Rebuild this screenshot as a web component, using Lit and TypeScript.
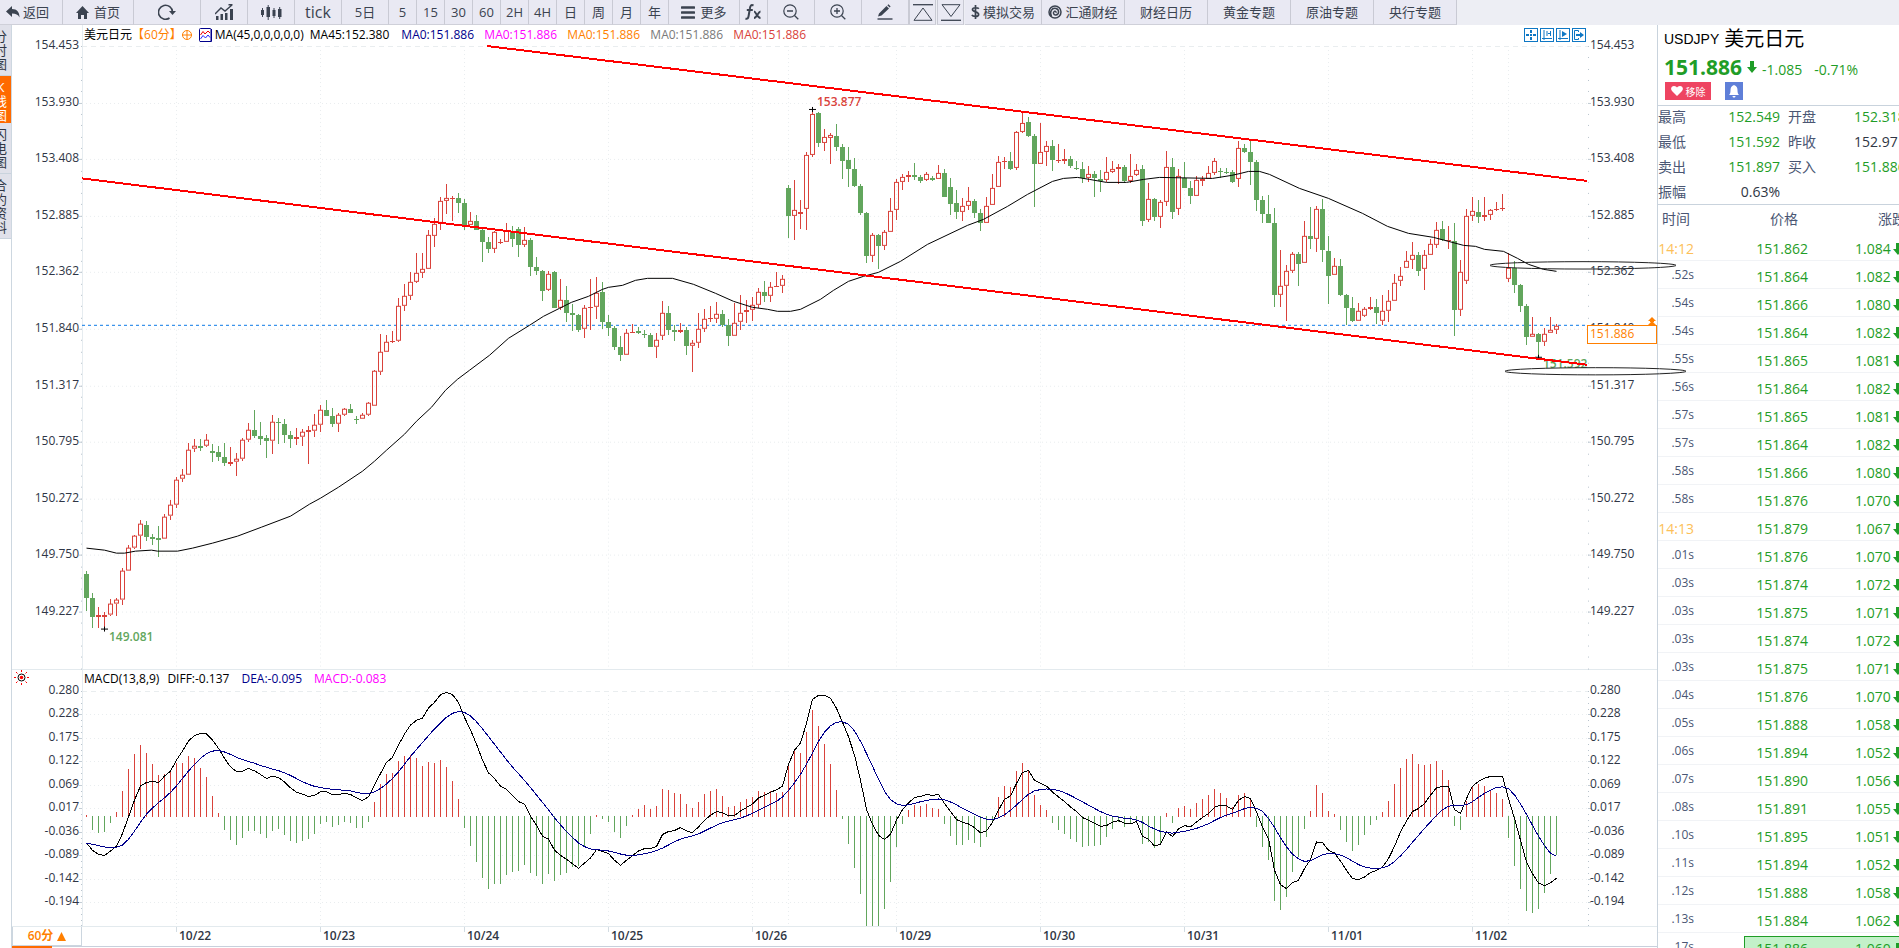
import { LitElement, html, svg, css, nothing } from "lit";
import { customElement } from "lit/decorators.js";

type Candle = [number, number, number, number, number];

/* Candles, one per hour: rising flag, high, body top, body bottom, low (plot rows). */
const CANDLES: Candle[] = `
0 571 574 598 611|0 593 598 617 628|1 607 615 617 628|1 612 615 617 628|1 599 604 615 616|1 598 600 604 616
1 568 571 600 605|1 545 548 571 571|1 535 536 548 549|1 520 524 536 549|0 521 525 537 541|0 534 537 539 545
0 526 538 540 557|1 514 517 539 539|1 500 505 516 520|1 477 480 505 508|1 469 475 479 482|1 443 450 475 475
1 439 446 449 452|0 439 446 448 451|1 434 440 446 447|0 444 451 453 462|0 446 452 457 461|0 443 457 463 466
1 447 462 464 466|1 453 459 462 476|1 438 440 459 461|1 423 430 440 442|0 410 430 436 438|0 422 436 439 445
0 435 438 441 458|1 415 422 441 454|0 418 422 423 444|0 419 424 435 443|0 431 435 439 448|1 428 437 439 445
1 429 432 437 446|1 426 430 432 464|1 414 425 431 437|1 405 410 425 432|0 400 410 416 416|0 408 416 424 427
1 413 415 424 432|1 408 409 415 416|0 404 409 413 413|0 416 419 420 424|1 413 415 419 419|1 402 403 415 416
1 370 371 406 406|1 334 352 372 375|1 335 342 352 352|1 331 341 342 343|1 298 306 341 342|1 284 296 306 311
1 272 282 296 300|1 253 273 282 283|1 253 269 273 278|1 230 235 269 269|1 218 224 236 247|1 197 201 223 230
1 184 198 201 214|1 196 198 199 221|0 193 198 203 213|0 199 203 225 230|1 212 221 225 225|0 215 221 230 230
0 229 230 242 262|0 237 242 249 253|1 231 232 249 253|1 239 242 243 244|1 223 231 242 242|0 226 231 239 247
0 227 229 245 257|1 227 240 245 247|0 238 240 267 276|0 257 267 271 275|0 270 271 291 301|1 271 274 290 291
0 271 272 308 308|1 279 300 308 310|0 286 300 313 322|0 304 313 315 331|0 314 315 330 332|1 305 308 329 338
1 279 307 308 330|1 277 293 307 319|0 282 292 322 329|0 315 322 328 336|0 326 328 347 350|0 336 347 355 361
1 329 333 355 355|1 324 332 333 333|0 327 331 333 334|0 330 334 335 338|0 333 335 347 347|1 333 340 347 358
1 301 313 336 340|0 306 313 330 335|0 325 330 332 341|1 323 330 332 333|0 327 330 346 355|1 340 343 346 372
1 313 329 343 348|1 309 319 329 332|1 306 318 319 322|1 302 314 319 323|0 310 314 325 327|0 319 325 336 346
1 303 323 336 336|1 295 313 322 330|1 300 310 312 323|1 297 305 310 321|1 288 292 305 308|0 281 292 296 302
1 282 287 296 302|1 272 286 287 287|1 275 279 286 293|0 185 188 216 238|1 180 210 216 240|1 200 212 214 229
1 152 155 209 230|1 111 114 155 157|0 112 113 143 147|1 129 137 143 151|1 133 135 138 164|0 124 136 147 151
0 144 147 161 179|0 147 160 169 187|0 158 169 186 187|0 184 186 213 215|0 212 213 256 263|1 233 235 256 262
0 234 235 246 269|1 230 232 246 250|1 198 211 232 232|1 179 182 210 220|1 174 177 182 190|1 171 175 177 182
0 163 175 177 180|0 175 177 181 183|1 172 174 180 181|0 176 178 180 181|1 165 173 179 179|0 169 173 197 197
0 178 187 204 215|0 190 203 212 219|1 198 206 212 221|1 187 201 206 210|0 199 201 213 218|0 209 213 223 231
1 197 206 223 223|1 174 188 205 205|1 156 162 187 187|1 157 161 162 169|0 152 161 169 170|1 131 132 168 170
1 112 123 132 133|0 117 122 136 137|0 134 136 164 207|1 123 152 164 164|1 141 146 152 166|0 140 146 160 171
1 144 160 161 163|1 149 159 161 164|0 156 159 166 168|0 161 168 169 170|0 162 169 178 183|1 166 174 178 182
0 171 174 178 197|0 170 179 181 192|1 157 172 180 182|1 161 169 172 173|1 164 167 169 184|0 165 167 181 183
1 154 176 181 183|1 164 170 175 176|0 165 169 221 226|1 183 199 220 222|0 198 199 217 221|1 200 202 217 228
1 151 167 202 206|0 158 167 212 219|1 169 176 209 215|0 162 178 188 188|0 181 188 196 204|1 176 180 196 196
1 176 179 181 186|1 166 173 179 179|1 158 161 173 175|0 168 171 172 178|0 168 172 173 174|0 170 172 182 183
1 141 148 179 187|0 144 148 152 153|0 141 152 162 185|0 160 162 200 211|0 196 200 214 223|0 195 214 223 223
0 208 223 295 307|1 250 286 295 307|1 265 271 286 321|1 252 254 271 273|0 252 254 264 286|1 221 236 263 263
0 207 236 239 249|1 206 209 239 252|0 199 209 250 262|0 236 251 276 304|1 258 266 275 275|0 259 266 295 296
0 294 295 308 325|0 297 308 321 322|1 303 311 321 321|1 307 309 316 317|1 297 307 309 310|0 299 307 313 324
1 295 311 321 325|1 290 301 311 322|1 274 283 301 301|1 267 276 281 286|1 251 261 268 268|1 242 255 260 269
0 252 255 271 276|1 250 255 269 290|1 239 244 255 255|1 222 230 245 248|0 221 229 240 241|1 226 240 241 249
0 223 241 310 336|1 260 272 310 316|1 209 216 281 284|1 197 211 216 221|0 200 212 217 223|1 197 215 217 221
1 209 210 215 220|1 202 209 210 211|1 194 208 209 211|1 253 268 279 282|0 261 268 285 293|0 284 285 306 312
0 304 306 337 345|1 317 334 337 337|0 333 334 342 358|1 328 334 342 346|1 317 330 333 333|1 324 326 330 334
`
  .trim()
  .split(/[|\n]/)
  .map((r) => r.trim().split(" ").map(Number) as Candle);

const MA45 =
  "86,548 104,550 116,553 124,553 135,551 151,550 157,551 177,551 192,548 212,543 237,536 261,527 290,516 309,504 320,498 338,487 362,471 374,461 386,450 404,434 416,421 431,407 445,390 457,379 469,370 489,355 508,338 529,325 543,316 559,308 571,302 588,296 602,289 608,287 622,285 635,280 647,278 672,278 693,284 715,293 733,301 752,307 767,309 777,311 790,311 800,309 820,299 833,290 848,281 863,276 878,272 900,261 927,244 967,225 983,219 1007,206 1027,194 1052,181 1063,178 1077,177 1089,179 1106,182 1126,182 1143,179 1159,177 1212,178 1231,175 1240,173 1248,171 1259,171 1269,174 1299,188 1328,198 1362,213 1387,226 1408,233 1433,237 1448,241 1463,245 1475,246 1484,249 1503,251 1517,258 1528,264 1543,269 1556,271";

const nums = (s: string) => s.trim().split(/\s+/).map(Number);

/* Oscillator series, three units to a pixel, zero at 528, smaller is higher. */
const HIST = nums(`
525 570 579 576 549 516 453 387 342 315 339 372 405 402 396 369 369 348 354 384 411 468 519 570 600 615 594 573 573 582
594 573 567 585 603 609 603 597 582 552 546 561 555 546 549 564 564 546 486 432 402 399 363 348 345 354 378 366 369 360
381 423 477 564 618 666 714 747 732 732 705 696 693 675 699 708 732 702 723 705 699 681 678 621 582 525 537 546 576 594
558 525 507 495 507 498 447 450 459 462 492 504 486 462 453 447 468 501 498 486 477 471 453 456 453 459 456 369 333 339
276 210 258 312 372 450 537 612 684 762 862 880 862 807 726 621 552 510 495 498 492 504 507 552 588 615 615 600 609 621
591 543 471 438 441 393 369 393 465 495 510 549 570 582 597 606 621 618 618 615 591 567 546 561 552 546 612 606 624 609
519 549 504 498 507 489 477 465 447 459 474 501 465 459 477 561 621 660 783 810 771 696 651 567 513 435 459 513 522 570
606 633 615 585 555 540 516 483 432 384 357 342 372 375 372 363 390 420 558 570 483 438 432 438 450 459 477 594 678 747
813 819 807 759 702 645`);

const DIFF = nums(`
608 630 642 646 632 618 580 530 480 437 427 423 427 408 393 360 333 303 286 280 281 300 325 355 380 394 394 385 392 403
415 408 412 425 443 456 462 469 465 455 455 463 463 459 463 473 481 470 435 400 367 352 315 282 255 241 234 204 187 164
157 164 187 232 270 312 360 398 415 438 447 466 484 492 528 555 588 596 630 645 657 670 684 668 653 628 634 640 660 675
660 646 632 625 625 619 583 574 571 562 572 577 560 540 525 514 517 527 526 512 502 491 473 465 456 449 438 373 330 309
250 178 166 166 175 205 247 290 345 420 508 552 585 598 582 540 508 488 472 469 463 466 463 490 514 538 546 551 562 578
572 546 510 477 467 430 397 391 420 430 438 456 470 484 500 514 532 540 549 558 556 546 541 549 551 544 588 597 617 612
575 589 566 556 560 545 532 520 501 495 497 508 480 469 475 515 560 595 690 733 745 727 720 685 658 605 607 630 638 662
690 715 718 710 697 690 680 655 618 575 542 514 505 490 465 443 439 439 508 520 475 438 424 414 409 409 409 475 535 600
665 700 728 736 727 714`);

const slotX = (i: number) => 86 + 6 * i;
const oscY = (v: number) => 640 + v / 3;
const DEA = DIFF.map((d, i) => d + (528 - HIST[i]) / 2).map((_, i, a) => {
  const part = a.slice(Math.max(0, i - 1), i + 2);
  return part.reduce((s, v) => s + v, 0) / part.length;
});
const line = (a: number[]) => a.map((v, i) => `${slotX(i) + 0.5},${oscY(v).toFixed(1)}`).join(" ");

const PRICES = ["154.453", "153.930", "153.408", "152.885", "152.362", "151.840", "151.317", "150.795", "150.272", "149.750", "149.227"];
const LEVELS = ["0.280", "0.228", "0.175", "0.122", "0.069", "0.017", "-0.036", "-0.089", "-0.142", "-0.194"];
const DAYS = ["10/22", "10/23", "10/24", "10/25", "10/26", "10/29", "10/30", "10/31", "11/01", "11/02"];
const priceY = (i: number) => Math.round(46 + i * 56.6);
const levelY = (i: number) => Math.round(691 + i * 23.45);
const dayX = (i: number) => 176 + 144 * i;

const LEFT = 82, WIDTH = 1506;
const P_TOP = 46, P_H = 623;
const M_TOP = 691, M_H = 235;
const pct = (v: number, from: number, span: number) => `${(((v - from) / span) * 100).toFixed(3)}%`;

const TICKS: [string, string, string][] = [
  ["14:12", "151.862", "1.084"], [".52s", "151.864", "1.082"], [".54s", "151.866", "1.080"], [".54s", "151.864", "1.082"],
  [".55s", "151.865", "1.081"], [".56s", "151.864", "1.082"], [".57s", "151.865", "1.081"], [".57s", "151.864", "1.082"],
  [".58s", "151.866", "1.080"], [".58s", "151.876", "1.070"], ["14:13", "151.879", "1.067"], [".01s", "151.876", "1.070"],
  [".03s", "151.874", "1.072"], [".03s", "151.875", "1.071"], [".03s", "151.874", "1.072"], [".03s", "151.875", "1.071"],
  [".04s", "151.876", "1.070"], [".05s", "151.888", "1.058"], [".06s", "151.894", "1.052"], [".07s", "151.890", "1.056"],
  [".08s", "151.891", "1.055"], [".10s", "151.895", "1.051"], [".11s", "151.894", "1.052"], [".12s", "151.888", "1.058"],
  [".13s", "151.884", "1.062"], [".17s", "151.886", "1.060"],
];

const base = css`
  * { box-sizing: border-box; }
  button {
    appearance: none; border: 0; background: none; padding: 0; margin: 0;
    font: inherit; color: inherit; cursor: pointer;
  }
  svg { display: block; flex: none; }
`;

const downArrow = html`<svg class="down" width="10" height="12" viewBox="0 0 10 12"><path d="M3 0h4v6h3L5 12 0 6h3z" fill="#1f9d27"/></svg>`;

@customElement("chart-toolbar")
export class ChartToolbar extends LitElement {
  static styles = [base, css`
    :host { display: flex; height: 25px; background: #edeef4; color: #3b4350; font-size: 13px; line-height: 20px; overflow: hidden; }
    .tool {
      flex: none; display: flex; align-items: center; justify-content: center; gap: 3px; height: 25px;
      background: #e9e9f3; border-right: 1px solid #c9cad4; border-bottom: 1px solid #cfd0d9; white-space: nowrap;
    }
    .back { width: 63px; justify-content: flex-start; padding-left: 6px; }
    .home { width: 71px; gap: 5px; }
    .reload { width: 67px; }
    .wide { width: 47px; }
    .tick { font-size: 16px; }
    .slim { width: 28px; }
    .edge { width: 27px; border-left: 1px solid #c9cad4; margin-right: 1px; }
    .trade { width: 77px; }
    .link { width: 83px; }
  `];

  render() {
    const s = "#3b4350";
    return html`
      <button class="tool back"><svg width="14" height="12" viewBox="0 0 14 12"><path d="M6 0v3c5 0 7.500 3 7.500 8.500C12 8.500 10 7.500 6 7.500V11L0 5.500z" fill=${s}/></svg>返回</button>
      <button class="tool home"><svg width="13" height="13" viewBox="0 0 13 13"><path d="M6.500 0 13 7h-2v6H8V9H5v4H2V7H0z" fill=${s}/></svg>首页</button>
      <button class="tool reload" aria-label="刷新"><svg width="18" height="16" viewBox="0 0 18 16"><path d="M11.500 14A7 7 0 1 1 14.500 8" fill="none" stroke=${s} stroke-width="1.600"/><path d="M11 7h7l-3.500 4z" fill=${s}/></svg></button>
      <button class="tool wide" aria-label="指标"><svg width="19" height="16" viewBox="0 0 19 16"><path d="M1 16v-4h2.500v4M5.500 16v-6H8v6M10 16V9h2.500v7M15 16V5h3v11" fill=${s}/><path d="M0 10 6 4l4 3 7-6M13.500.700H17.500" fill="none" stroke=${s} stroke-width="1.400"/></svg></button>
      <button class="tool wide" aria-label="K线"><svg width="21" height="15" viewBox="0 0 21 15"><path d="M0 5h3v5H0zM5.500 2h3.500v10H5.500zM11.500 5h3v6h-3zM17 4h3.500v8H17z" fill=${s}/><path d="M1.500 3v9M7.200 0v15M13 3v10M18.700 2v12" stroke=${s}/></svg></button>
      <button class="tool wide tick">tick</button>
      <button class="tool wide">5日</button>
      ${["5", "15", "30", "60", "2H", "4H", "日", "周", "月", "年"].map((t) => html`<button class="tool slim">${t}</button>`)}
      <button class="tool home"><svg width="14" height="13" viewBox="0 0 14 13"><path d="M1 1.500h12M1 6.500h12M1 11.500h12" stroke=${s} stroke-width="2.600" stroke-linecap="round"/></svg>更多</button>
      <button class="tool slim" aria-label="公式"><svg width="17" height="16" viewBox="0 0 17 16"><path d="M8.500 1.500C6 .200 5.200 2 4.800 5L3.600 12C3.200 14.600 2.200 15.200.500 14.500M1.800 6h6" fill="none" stroke=${s} stroke-width="2"/><path d="M9 7.500c2 0 3 6.500 6.500 6.500M15.500 7.500C13 7.500 12 14 9 14" fill="none" stroke=${s} stroke-width="1.900"/></svg></button>
      <button class="tool wide" aria-label="缩小"><svg width="16" height="16" viewBox="0 0 16 16"><circle cx="7" cy="7" r="6.200" fill="none" stroke=${s} stroke-width="1.200"/><path d="M4 7h6M11.500 11.500 15.300 15.300" stroke=${s} stroke-width="1.300"/></svg></button>
      <button class="tool wide" aria-label="放大"><svg width="16" height="16" viewBox="0 0 16 16"><circle cx="7" cy="7" r="6.200" fill="none" stroke=${s} stroke-width="1.200"/><path d="M4 7h6M7 4v6M11.500 11.500 15.300 15.300" stroke=${s} stroke-width="1.300"/></svg></button>
      <button class="tool wide" aria-label="画线"><svg width="16" height="16" viewBox="0 0 16 16"><path d="M1 12.500 2 9.500 9.500 2 12 4.500 4.500 11.500zM10.300 1.300 11.500.300 13.600 2.400 12.700 3.600z" fill=${s}/><path d="M.500 15h15" stroke=${s} stroke-width="1.400"/></svg></button>
      <button class="tool edge" aria-label="上移"><svg width="20" height="17" viewBox="0 0 20 17"><path d="M0 .700h20" stroke=${s} stroke-width="1.300"/><path d="M10 4 19 16.300H1z" fill="none" stroke=${s}/></svg></button>
      <button class="tool edge" aria-label="下移"><svg width="20" height="17" viewBox="0 0 20 17"><path d="M0 16.300h20" stroke=${s} stroke-width="1.300"/><path d="M10 12.500 19 .700H1z" fill="none" stroke=${s}/></svg></button>
      <button class="tool trade"><svg width="9" height="14" viewBox="0 0 9 14"><path d="M7.800 3.800C7 2.600 1.500 2 1.500 4.600 1.500 7.500 7.600 6.200 7.600 9.400 7.600 12 2 12 .900 9.900M4.500 0v14" fill="none" stroke=${s} stroke-width="1.700"/></svg>模拟交易</button>
      <button class="tool link"><svg width="14" height="14" viewBox="0 0 14 14"><circle cx="7" cy="7" r="6" fill="none" stroke=${s} stroke-width="1.500"/><path d="M3.500 11.500C1 7 4 2.500 8 3.500c3.500 1 3.500 6-.200 6.500-2.300.200-3.300-2.700-1.300-3.700 1.200-.500 2 .800 1.200 1.500" fill="none" stroke=${s} stroke-width="1.500"/></svg>汇通财经</button>
      ${["财经日历", "黄金专题", "原油专题", "央行专题"].map((t) => html`<button class="tool link">${t}</button>`)}
    `;
  }
}

@customElement("side-tabs")
export class SideTabs extends LitElement {
  static styles = [base, css`
    :host { display: flex; flex-direction: column; width: 12px; border-right: 1px solid #cdd7e0; overflow: hidden; color: #2f3644; font-size: 13px; line-height: 14px; }
    .tab { display: flex; justify-content: flex-end; padding: 4px 4px 4px 0; background: #e0e1ea; border-bottom: 1px solid #c9d3dd; }
    .tab span { flex: none; width: 13px; text-align: center; word-break: break-all; }
    .active { background: #ff6a00; color: #fff; padding: 4px 4px 0 0; border-color: #ff6a00; }
  `];
  render() {
    return html`${["分时图", "K线图", "闪电图", "合约资料"].map(
      (t, i) => html`<button class="tab ${i === 1 ? "active" : ""}"><span>${[...t].map((c) => html`${c}<br>`)}</span></button>`,
    )}`;
  }
}

@customElement("price-chart")
export class PriceChart extends LitElement {
  static styles = [base, css`
    :host { display: flex; flex-direction: column; min-width: 0; font-size: 12px; line-height: 16px; color: #2f3646; position: relative; z-index: 1; }
    .panel { display: grid; grid-template-columns: 70px minmax(0, 1fr) 69px; min-height: 0; border-bottom: 1px solid #e3eaee; }
    .price { flex: 645 1 0; }
    .macd { flex: 257 1 0; }
    .axis { position: relative; margin-top: 21px; }
    .axis span { position: absolute; margin-top: -9px; white-space: nowrap; }
    .left span { right: 3px; }
    .right span { left: 2px; }
    .body { display: flex; flex-direction: column; min-width: 0; min-height: 0; border-left: 1px solid #e6ecf0; }
    .legend { display: flex; align-items: center; height: 21px; padding: 0 0 2px 1px; white-space: nowrap; color: #000; }
    .legend span { margin-right: 8px; }
    .legend .tight { margin-right: 0; }
    .legend .short { margin-right: 6px; }
    .legend .long { margin-right: 12px; }
    .ma { min-width: 75px; }
    .legend svg { margin-right: 7px; }
    .legend .set { margin-right: 3px; }
    .orange { color: #ff7f00; } .navy { color: #00008b; } .magenta { color: #f0f; } .gray { color: #7a7a7a; } .red { color: #d9423b; } .green { color: #62a65d; }
    .tools { display: flex; gap: 2px; margin-left: auto; margin-right: 2px; }
    .legend .tools svg { margin: 0; }
    .stage { position: relative; flex: 1; min-height: 0; margin-left: -1px; }
    .plot { position: absolute; inset: 0; width: 100%; height: 100%; overflow: visible; pointer-events: none; }
    .mark { position: absolute; margin-top: -8px; font-weight: 600; }
    .axis .last {
      left: -1px; right: 0; height: 19px; margin-top: 0; padding-left: 2px; background: #fff;
      border: 1px solid #ff7f00; color: #ff7f00; line-height: 16px;
    }
    .axis svg { position: absolute; right: 1px; margin-top: -9px; }
    .sun { position: absolute; left: 2px; top: -21px; }
    .axis .sun { right: auto; margin-top: 0; }
    .foot { display: grid; grid-template-columns: 70px minmax(0, 1fr) 69px; height: 20px; border-bottom: 1px solid #c8d0dc; }
    .unit { display: flex; align-items: center; justify-content: center; gap: 4px; border: 1px solid #ccd6df; border-top: 0; color: #ff7f00; font-weight: 600; }
    .dates { position: relative; font-weight: 600; color: #2f3644; }
    .dates span { position: absolute; border-left: 1px solid #d3dce2; height: 5px; padding-left: 2px; line-height: 17px; }
    .scroll { height: 1px; }
    .thumb { width: 40px; height: 2px; margin-top: -1px; background: #ff6a00; }
  `];

  private grid(ys: number[], top: number, bottom: number) {
    return svg`<g stroke="#e9edef" fill="none" shape-rendering="crispEdges">
      ${ys.map((y, i) => svg`<path d="M82 ${y + 0.5}H1588" stroke-dasharray=${i ? "1 3" : "5 4"}/>`)}
      ${[...DAYS.map((_, i) => dayX(i)), 788, 1508].map((x) => svg`<path d="M${x + 0.5} ${top}V${bottom}" stroke-dasharray="1 3"/>`)}
    </g>`;
  }

  private ruler(top: number, bottom: number, step: number) {
    const d: string[] = [];
    for (let y = top; y < bottom; y += step) d.push(`M81 ${Math.round(y) + 0.5}h1M1588 ${Math.round(y) + 0.5}h1`);
    return svg`<path d=${d.join("")} stroke="#b9c4cd" shape-rendering="crispEdges"/>`;
  }

  private majors(ys: number[]) {
    return svg`<path d=${ys.slice(1).map((y) => `M79 ${y + 0.5}h3M1588 ${y + 0.5}h3`).join("")} stroke="#c3cdd5" shape-rendering="crispEdges"/>`;
  }

  private candle([up, h, t, b, l]: Candle, i: number) {
    const x = slotX(i);
    const c = up ? "#d9423b" : "#62a65d";
    if (!up || b - t < 3)
      return svg`<g fill=${c}><rect x=${x} y=${h} width="1" height=${l - h}/><rect x=${x - 2} y=${t} width="5" height=${Math.max(1, b - t)}/></g>`;
    return svg`<g fill=${c}><rect x=${x} y=${h} width="1" height=${t - h}/><rect x=${x} y=${b} width="1" height=${Math.max(0, l - b)}/><rect x=${x - 1.5} y=${t + 0.5} width="4" height=${b - t - 1} fill="none" stroke=${c}/></g>`;
  }

  private labels(list: string[], y: (i: number) => number, top: number, span: number) {
    return list.map((t, i) => html`<span style="top:${pct(y(i), top, span)}">${t}</span>`);
  }

  render() {
    const py = PRICES.map((_, i) => priceY(i));
    const my = LEVELS.map((_, i) => levelY(i));
    const marks: [string, string, number, number][] = [
      ["153.877", "red", 817, 102], ["149.081", "green", 109, 637], ["151.592", "green", 1543, 364],
    ];
    const b = "#0e77c4";
    return html`
      <section class="panel price">
        <div class="axis left">${this.labels(PRICES, priceY, P_TOP, P_H)}</div>
        <div class="body">
          <div class="legend">
            <span class="tight">美元日元</span><span class="tight orange">【60分】</span>
            <svg width="10" height="10" viewBox="0 0 10 10"><circle cx="5" cy="5" r="4.500" fill="none" stroke="#ff7f00"/><path d="M0 5h10M5 1v8" stroke="#ff7f00"/></svg>
            <svg class="set" width="13" height="14" viewBox="0 0 13 14"><rect x=".500" y=".500" width="11.500" height="13" rx="1" fill="#fff" stroke="#00008b"/><path d="M12.500 1v12.500H1" fill="none" stroke="#00008b"/><path d="M1.500 7 4 3.500 6 6 9 3l2 2" fill="none" stroke="#e00"/><path d="M1.500 11 4 7.500 6.500 10 9 7l2 2.500" fill="none" stroke="#22f"/></svg>
            <span class="short">MA(45,0,0,0,0,0)</span><span class="long">MA45:152.380</span>
            ${["navy", "magenta", "orange", "gray", "red"].map((c) => html`<span class="ma ${c}">MA0:151.886</span>`)}
            <div class="tools">
              <button aria-label="十字光标"><svg width="14" height="14" viewBox="0 0 14 14"><rect x=".500" y=".500" width="13" height="13" fill="none" stroke=${b}/><path d="M7 2v3M7 9v3M2 7h3M9 7h3M6 7h2" stroke=${b} stroke-width="2"/></svg></button>
              <button aria-label="纵轴"><svg width="14" height="14" viewBox="0 0 14 14"><rect x=".500" y=".500" width="13" height="13" fill="none" stroke=${b}/><path d="M4 2v10M2 10.500h10M7 3v5M10.500 3v5M8 5.500h2" stroke=${b} fill="none"/></svg></button>
              <button aria-label="播放"><svg width="14" height="14" viewBox="0 0 14 14"><rect x=".500" y=".500" width="13" height="13" fill="none" stroke=${b}/><path d="M4 2v10M2 10.500h10" stroke=${b}/><path d="M6 3v6l5-3z" fill=${b}/></svg></button>
              <button aria-label="移至最新"><svg width="14" height="14" viewBox="0 0 14 14"><rect x=".500" y=".500" width="13" height="13" fill="none" stroke=${b}/><path d="M6.500 4V2.500h-4v9h4V10" fill="none" stroke=${b}/><path d="M4 6h4V4l4 3-4 3V8H4z" fill=${b}/></svg></button>
            </div>
          </div>
          <div class="stage">
            ${marks.map(([t, c, x, y]) => html`<span class="mark ${c}" style="left:${pct(x, LEFT, WIDTH)};top:${pct(y, P_TOP, P_H)}">${t}</span>`)}
            <svg class="plot" viewBox="${LEFT} ${P_TOP} ${WIDTH} ${P_H}" preserveAspectRatio="none">
              ${this.grid(py, 46, 669)}${this.ruler(46, 669, 11.32)}${this.majors(py)}
              <path d="M82 325.500H1588" stroke="#0a78e6" stroke-dasharray="3 3" shape-rendering="crispEdges"/>
              <g shape-rendering="crispEdges">${CANDLES.map((c, i) => this.candle(c, i))}</g>
              <polyline points=${MA45} fill="none" stroke="#000" transform="translate(.5 .5)" shape-rendering="crispEdges"/>
              <path d="M809 109.500h7M812.500 107v5M101 629.500h7M104.500 627v5M1535 357.500h7M1538.500 355v5" stroke="#000" shape-rendering="crispEdges"/>
              <path d="M487 46 1587 181M82 178.500 1587 365" stroke="#f00" stroke-width="2" shape-rendering="crispEdges"/>
              <g fill="none" stroke="#222"><ellipse cx="1583" cy="265.500" rx="93" ry="3.700"/><ellipse cx="1595.500" cy="371.500" rx="90.500" ry="3.600"/></g>
            </svg>
          </div>
        </div>
        <div class="axis right">
          ${this.labels(PRICES, priceY, P_TOP, P_H)}
          <svg style="top:${pct(326, P_TOP, P_H)}" width="8" height="9" viewBox="0 0 8 9"><path d="M4 0 8 4H0zM4 4 8 8H0zM2 3h4v2H2z" fill="#ff7f00"/></svg>
          <span class="last" style="top:${pct(325, P_TOP, P_H)}">151.886</span>
        </div>
      </section>
      <section class="panel macd">
        <div class="axis left">
          <svg class="sun" width="15" height="15" viewBox="0 0 15 15"><circle cx="7.500" cy="7.500" r="3.500" fill="#fff" stroke="#000"/><circle cx="7.500" cy="7.500" r="1.800" fill="#f00"/><path d="M7.500 0v2M7.500 13v2M0 7.500h2M13 7.500h2M2 2l1.500 1.500M11.500 11.500 13 13M13 2l-1.500 1.500M3.500 11.500 2 13" stroke="#f00"/></svg>
          ${this.labels(LEVELS, levelY, M_TOP, M_H)}
        </div>
        <div class="body">
          <div class="legend"><span>MACD(13,8,9)</span><span class="long">DIFF:-0.137</span><span class="navy long">DEA:-0.095</span><span class="magenta">MACD:-0.083</span></div>
          <div class="stage">
            <svg class="plot" viewBox="${LEFT} ${M_TOP} ${WIDTH} ${M_H}" preserveAspectRatio="none">
              ${this.grid(my, 691, 926)}${this.ruler(691, 926, 5.86)}${this.majors(my)}
              <g shape-rendering="crispEdges">${HIST.map((v, i) => {
                const y = Math.round(oscY(Math.min(v, 858)));
                const up = v < 528;
                return svg`<rect x=${slotX(i)} y=${up ? y : 816} width="1" height=${Math.max(1, up ? 817 - y : y - 816)} fill=${up ? "#d9423b" : "#62a65d"}/>`;
              })}</g>
              <polyline points=${line(DIFF)} fill="none" stroke="#000" shape-rendering="crispEdges"/>
              <polyline points=${line(DEA)} fill="none" stroke="#00008b" shape-rendering="crispEdges"/>
            </svg>
          </div>
        </div>
        <div class="axis right">${this.labels(LEVELS, levelY, M_TOP, M_H)}</div>
      </section>
      <div class="foot">
        <button class="unit">60分<svg width="9" height="9" viewBox="0 0 9 9"><path d="M4.500 0 9 9H0z" fill="#ff7f00"/></svg></button>
        <div class="dates">${DAYS.map((d, i) => html`<span style="left:${pct(dayX(i), LEFT, WIDTH)}">${d}</span>`)}</div>
      </div>
      <div class="scroll"><div class="thumb"></div></div>
    `;
  }
}

@customElement("quote-panel")
export class QuotePanel extends LitElement {
  static styles = [base, css`
    :host { display: block; border-left: 1px solid #c9d3dd; overflow: hidden; font-size: 14px; color: #4a5673; background: #fff; }
    .inner { width: 260px; }
    .head { height: 80px; padding: 0 6px; }
    .name { display: flex; align-items: center; height: 28px; gap: 5px; margin: 0; font-weight: 400; font-size: 14px; color: #000; font-family: "Liberation Sans", "Noto Sans CJK SC", sans-serif; }
    .name b { font-size: 20px; font-weight: 400; line-height: 28px; }
    .now { display: flex; align-items: center; height: 28px; color: #1f9d27; line-height: 20px; }
    .now strong { font-size: 21px; line-height: 24px; }
    .now .down { margin: 0 5px; }
    .now span { padding-top: 6px; margin-right: 12px; }
    .acts { display: flex; gap: 14px; margin-top: 1px; padding-left: 1px; }
    .remove { display: flex; align-items: center; justify-content: center; gap: 3px; width: 46px; height: 18px; background: #ee4461; color: #fff; font-size: 10px; }
    .bell { display: flex; align-items: center; justify-content: center; width: 18px; height: 18px; background: #5f7fd8; }
    dl { display: grid; grid-template-columns: 28px 94px 66px 64px; margin: 0; height: 100px; border-top: 1px solid #c9d3dd; border-bottom: 1px solid #c9d3dd; }
    dt, dd { margin: 0; height: 25px; line-height: 22px; white-space: nowrap; }
    dt:nth-of-type(even) { padding-left: 8px; }
    dd { color: #1f9d27; text-align: right; }
    dd:nth-of-type(even) { text-align: left; padding-left: 8px; }
    .plain { color: #2f3644; }
    table { width: 260px; border-spacing: 0; table-layout: fixed; }
    th, td { height: 28px; padding: 0; font-weight: 400; text-align: left; line-height: 20px; white-space: nowrap; }
    td { padding-top: 4px; border-bottom: 1px solid #f1f3f6; color: #1f9d27; }
    .c1 { width: 86px; } .c2 { width: 100px; } .c3 { width: 74px; }
    th:nth-child(1) { padding-left: 4px; } th:nth-child(2) { padding-left: 26px; } th:nth-child(3) { padding-left: 34px; }
    .time { color: #4a5673; font-size: 12px; text-align: right; padding: 1px 50px 0 0; }
    .minute { color: #fdbf58; font-size: 14px; padding-top: 4px; }
    .value { text-align: right; padding-right: 36px; }
    .delta { padding-left: 11px; }
    .delta div { display: flex; align-items: center; gap: 2px; }
    .hot td:nth-child(n + 2) { padding-top: 1px; border-top: 3px solid #fff; background: #c3f1c9; background-clip: padding-box; box-shadow: inset 0 1px #1f9d27; }
    .hot td:nth-child(2) { box-shadow: inset 1px 1px #1f9d27; }
  `];

  render() {
    return html`<div class="inner">
      <header class="head">
        <h1 class="name">USDJPY <b>美元日元</b></h1>
        <div class="now"><strong>151.886</strong>${downArrow}<span>-1.085</span><span>-0.71%</span></div>
        <div class="acts">
          <button class="remove"><svg width="12" height="10" viewBox="0 0 12 10"><path d="M6 10 1 5C-1 2.500.600 0 3 0c1.500 0 2.500.800 3 1.600C6.500.800 7.500 0 9 0c2.400 0 4 2.500 2 5z" fill="#fff"/></svg>移除</button>
          <button class="bell" aria-label="提醒"><svg width="12" height="13" viewBox="0 0 12 13"><path d="M6 0C3 1 2.500 3 2.500 5.500 2.500 8 2 9 1 10h10c-1-1-1.500-2-1.500-4.500C9.500 3 9 1 6 0zM4.500 11h3c0 2-3 2-3 0z" fill="#fff"/></svg></button>
        </div>
      </header>
      <dl>
        <dt>最高</dt><dd>152.549</dd><dt>开盘</dt><dd>152.318</dd>
        <dt>最低</dt><dd>151.592</dd><dt>昨收</dt><dd class="plain">152.971</dd>
        <dt>卖出</dt><dd>151.897</dd><dt>买入</dt><dd>151.886</dd>
        <dt>振幅</dt><dd class="plain">0.63%</dd>
      </dl>
      <table>
        <colgroup><col class="c1"><col class="c2"><col class="c3"></colgroup>
        <thead><tr><th>时间</th><th>价格</th><th>涨跌</th></tr></thead>
        <tbody>${TICKS.map(([t, p, d], i) => html`<tr class=${i === TICKS.length - 1 ? "hot" : nothing}>
          <td class="time ${t.includes(":") ? "minute" : ""}">${t}</td><td class="value">${p}</td><td class="delta"><div>${d}${downArrow}</div></td></tr>`)}</tbody>
      </table>
    </div>`;
  }
}

@customElement("app-root")
export class AppRoot extends LitElement {
  static styles = [base, css`
    :host {
      display: flex; flex-direction: column; height: 100vh; overflow: hidden; background: #fff;
      font-family: "Open Sans", "Noto Sans CJK SC", sans-serif;
    }
    .main { flex: 1; min-height: 0; display: grid; grid-template-columns: 12px minmax(0, 1fr) 242px; }
  `];
  render() {
    return html`<chart-toolbar></chart-toolbar>
      <main class="main"><side-tabs></side-tabs><price-chart></price-chart><quote-panel></quote-panel></main>`;
  }
}
